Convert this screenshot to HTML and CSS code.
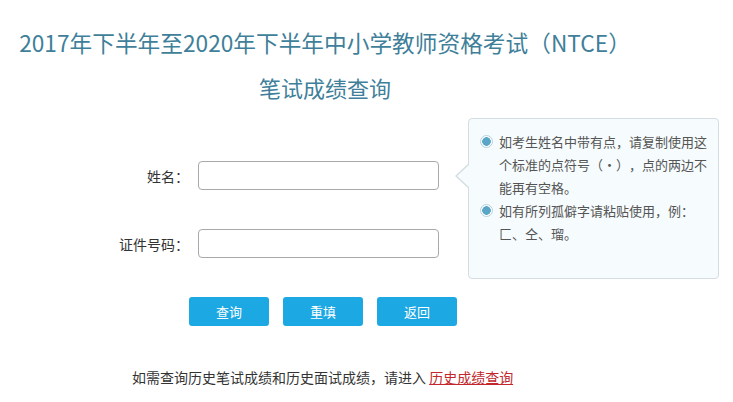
FILE: index.html
```html
<!DOCTYPE html>
<html lang="zh-CN">
<head>
<meta charset="utf-8">
<title>笔试成绩查询</title>
<link rel="stylesheet" href="styles.css">
</head>
<body>
<div class="page">
  <div class="heading">
    <h1 class="title">2017年下半年至2020年下半年中小学教师资格考试（NTCE）</h1>
    <h2 class="subtitle">笔试成绩查询</h2>
  </div>
  <div class="main">
    <div class="fields">
      <div class="row">
        <label class="label" for="name">姓名：</label>
        <input class="input" id="name" type="text">
      </div>
      <div class="row">
        <label class="label" for="idno">证件号码：</label>
        <input class="input" id="idno" type="text">
      </div>
    </div>
    <div class="tip">
      <div class="tip-item">
        <span class="radio"></span>
        <p class="tip-text">如考生姓名中带有点，请复制使用这<br>个标准的点符号（·），点的两边不<br>能再有空格。</p>
      </div>
      <div class="tip-item">
        <span class="radio"></span>
        <p class="tip-text">如有所列孤僻字请粘贴使用，例：<br>匚、仝、瑠。</p>
      </div>
    </div>
  </div>
  <div class="actions">
    <button class="btn" type="button">查询</button>
    <button class="btn" type="button">重填</button>
    <button class="btn" type="button">返回</button>
  </div>
  <p class="notice">如需查询历史笔试成绩和历史面试成绩，请进入 <a class="link" href="#">历史成绩查询</a></p>
</div>
</body>
</html>
```

FILE: styles.css
```css
* { box-sizing: border-box; }
html, body { margin: 0; padding: 0; background: #fff; }
body {
  font-family: "Microsoft YaHei", "Noto Sans CJK SC", "Noto Sans", sans-serif;
  color: #333;
  text-spacing-trim: space-all;
}
.page { width: 733px; height: 402px; overflow: hidden; }
.heading { width: 650px; padding-top: 20px; text-align: center; }
.title {
  margin: 0;
  font-size: 22.7px;
  font-weight: normal;
  line-height: 45px;
  color: #3f7f9a;
  letter-spacing: 0;
  white-space: nowrap;
}
.subtitle {
  margin: 0;
  font-size: 22px;
  font-weight: normal;
  line-height: 45px;
  color: #3f7f9a;
}
.main {
  display: flex;
  align-items: flex-start;
  margin-top: 8px;
  padding-left: 85px;
}
.fields {
  display: flex;
  flex-direction: column;
  gap: 39px;
  padding-top: 43px;
}
.row { display: flex; align-items: center; }
.label {
  width: 104px;
  margin-right: 9px;
  text-align: right;
  font-size: 14px;
  line-height: 20px;
  color: #333;
}
.input {
  width: 241px;
  height: 29px;
  border: 1px solid #a9a9a9;
  border-radius: 4px;
  background: #fff;
  margin: 0;
  padding: 0 6px;
  outline: none;
}
.tip {
  position: relative;
  width: 251px;
  height: 161px;
  margin-left: 29px;
  padding: 11px 6px 0 11px;
  background: #f6fbfd;
  border: 1px solid #d3dde2;
  border-radius: 4px;
}
.tip::before, .tip::after {
  content: "";
  position: absolute;
  top: 44px;
  width: 0;
  height: 0;
  border-style: solid;
}
.tip::before {
  left: -14px;
  border-width: 13px 14px 13px 0;
  border-color: transparent #d3dde2 transparent transparent;
}
.tip::after {
  left: -12px;
  top: 45px;
  border-width: 12px 13px 12px 0;
  border-color: transparent #f6fbfd transparent transparent;
}
.tip-item { display: flex; align-items: flex-start; }
.radio {
  flex: none;
  width: 13px;
  height: 13px;
  margin-top: 5px;
  margin-right: 6px;
  border: 1px solid #b8d3df;
  border-radius: 50%;
  background: radial-gradient(circle, #5aa6c9 0, #5aa6c9 4px, #fff 4.6px);
}
.tip-text {
  margin: 0;
  font-size: 13px;
  line-height: 23px;
  color: #555;
  white-space: nowrap;
}
.actions {
  display: flex;
  gap: 14px;
  margin-top: 18px;
  padding-left: 189px;
}
.btn {
  width: 80px;
  height: 29px;
  margin: 0;
  padding: 0;
  border: none;
  border-radius: 3px;
  background: #1ca8e2;
  color: #fff;
  font-family: inherit;
  font-size: 13px;
  line-height: 29px;
  cursor: pointer;
}
.notice {
  margin: 41px 0 0;
  padding-left: 132px;
  font-size: 14px;
  line-height: 20px;
  color: #333;
}
.link { color: #c1272d; text-decoration: underline; }
```
